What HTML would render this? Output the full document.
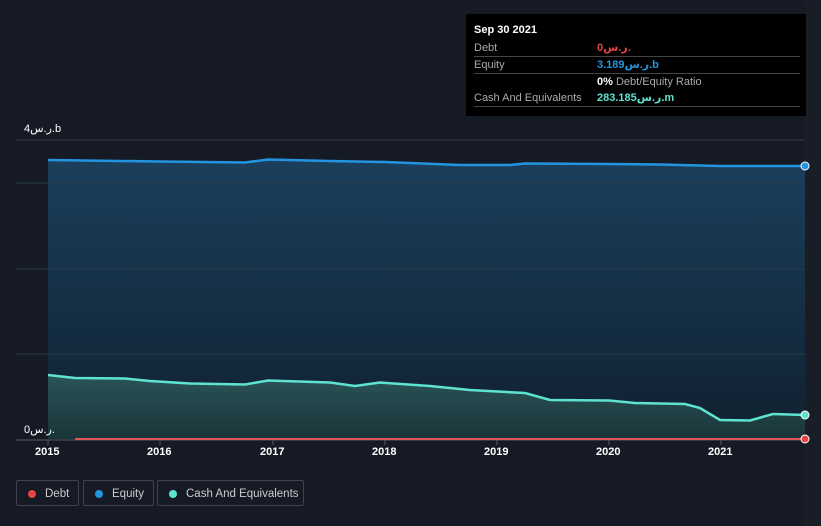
<!DOCTYPE html>
<html><head><meta charset="utf-8"><style>
body{margin:0;width:821px;height:526px;background:#151a24;font-family:"Liberation Sans","DejaVu Sans",sans-serif;overflow:hidden;position:relative}
.tt{position:absolute;left:466px;top:14px;width:340px;height:102px;background:#000;color:#fff;font-size:11px}
.tt .r{position:absolute;left:8px;right:6px;border-bottom:1px solid #444;height:16px;line-height:16px}
.tt .l{color:#aaa}
.tt .v{position:absolute;left:123px;top:0;font-weight:bold}
.leg{position:absolute;top:480px;height:26px;border:1px solid #3e434c;border-radius:2px;color:#ccc;font-size:11.5px;line-height:26px;box-sizing:border-box;white-space:nowrap}
.leg i{position:absolute;left:11px;top:9px;width:8px;height:8px;border-radius:50%}
.leg span{position:absolute;left:28px}
.ax{position:absolute;color:#fff;font-size:11px;font-weight:bold;top:446px}
</style></head><body>
<svg width="821" height="526" style="position:absolute;left:0;top:0">
<defs>
<linearGradient id="eg" x1="0" y1="0" x2="0" y2="1"><stop offset="0" stop-color="#1b3f5c"/><stop offset="1" stop-color="#10202f"/></linearGradient>
<linearGradient id="cg" x1="0" y1="0" x2="0" y2="1"><stop offset="0" stop-color="#2a5458"/><stop offset="1" stop-color="#1a3438"/></linearGradient>
</defs>
<rect x="805" y="0" width="16" height="526" fill="#181d26"/>
<line x1="16" y1="140" x2="805" y2="140" stroke="#3a3f48"/>
<path d="M48,160 L160,161.5 L245,162.5 L268,159.5 L330,161 L385,162 L460,165 L510,165 L525,163.5 L609,164 L660,164.5 L720,166 L805,166 L805,439 L48,439Z" fill="url(#eg)"/>
<line x1="16" y1="183" x2="805" y2="183" stroke="#2c3e50" stroke-width="1"/>
<line x1="16" y1="269" x2="805" y2="269" stroke="#2a3a4b" stroke-width="1"/>
<line x1="16" y1="354" x2="805" y2="354" stroke="#28384a" stroke-width="1"/>
<path d="M48,375 L75,378 L125,378.5 L150,381 L190,383.5 L245,384.5 L268,380.5 L330,382.5 L355,386 L380,382.5 L430,386 L470,390 L525,393 L550,400 L609,400.5 L635,403 L685,404 L700,408 L720,420 L750,420.5 L773,414 L805,415 L805,439 L48,439Z" fill="url(#cg)"/>
<path d="M48,160 L160,161.5 L245,162.5 L268,159.5 L330,161 L385,162 L460,165 L510,165 L525,163.5 L609,164 L660,164.5 L720,166 L805,166" fill="none" stroke="#2394df" stroke-width="2.5"/>
<path d="M48,375 L75,378 L125,378.5 L150,381 L190,383.5 L245,384.5 L268,380.5 L330,382.5 L355,386 L380,382.5 L430,386 L470,390 L525,393 L550,400 L609,400.5 L635,403 L685,404 L700,408 L720,420 L750,420.5 L773,414 L805,415" fill="none" stroke="#5ee3d0" stroke-width="2.5"/>
<line x1="16" y1="440" x2="805" y2="440" stroke="#555a63"/>
<line x1="75" y1="439" x2="805" y2="439" stroke="#e0555a" stroke-width="2"/>
<g stroke="#555a63"><line x1="48" y1="440" x2="48" y2="445"/><line x1="160" y1="440" x2="160" y2="445"/><line x1="273" y1="440" x2="273" y2="445"/><line x1="385" y1="440" x2="385" y2="445"/><line x1="497" y1="440" x2="497" y2="445"/><line x1="609" y1="440" x2="609" y2="445"/><line x1="721" y1="440" x2="721" y2="445"/></g>
<circle cx="805" cy="166" r="4" fill="#2394df" stroke="#fff" stroke-width="1"/>
<circle cx="805" cy="415" r="4" fill="#5ee3d0" stroke="#fff" stroke-width="1"/>
<circle cx="805" cy="439" r="4" fill="#e84444" stroke="#fff" stroke-width="1"/>
<text x="24" y="132" fill="#fff" font-size="11" font-family="Liberation Sans, DejaVu Sans, sans-serif">4ر.س.b</text>
<text x="24" y="433" fill="#fff" font-size="11" font-family="Liberation Sans, DejaVu Sans, sans-serif">0ر.س.</text>
</svg>
<div class="ax" style="left:35px">2015</div><div class="ax" style="left:147px">2016</div><div class="ax" style="left:260px">2017</div><div class="ax" style="left:372px">2018</div><div class="ax" style="left:484px">2019</div><div class="ax" style="left:596px">2020</div><div class="ax" style="left:708px">2021</div>
<div class="tt">
<div style="position:absolute;left:8px;top:10px;font-weight:bold">Sep 30 2021</div>
<div class="r" style="top:26px"><span class="l">Debt</span><span class="v" style="color:#e84444">0ر.س.</span></div>
<div class="r" style="top:43px"><span class="l">Equity</span><span class="v" style="color:#2394df">3.189ر.س.b</span></div>
<div style="position:absolute;left:131px;top:60px;line-height:16px"><b>0%</b> <span style="color:#aaa">Debt/Equity Ratio</span></div>
<div class="r" style="top:76px"><span class="l">Cash And Equivalents</span><span class="v" style="color:#5ee3d0">283.185ر.س.m</span></div>
</div>
<div class="leg" style="left:16px;width:63px"><i style="background:#e84444"></i><span>Debt</span></div>
<div class="leg" style="left:83px;width:71px"><i style="background:#2394df"></i><span>Equity</span></div>
<div class="leg" style="left:157px;width:147px"><i style="background:#5ee3d0"></i><span>Cash And Equivalents</span></div>
</body></html>
